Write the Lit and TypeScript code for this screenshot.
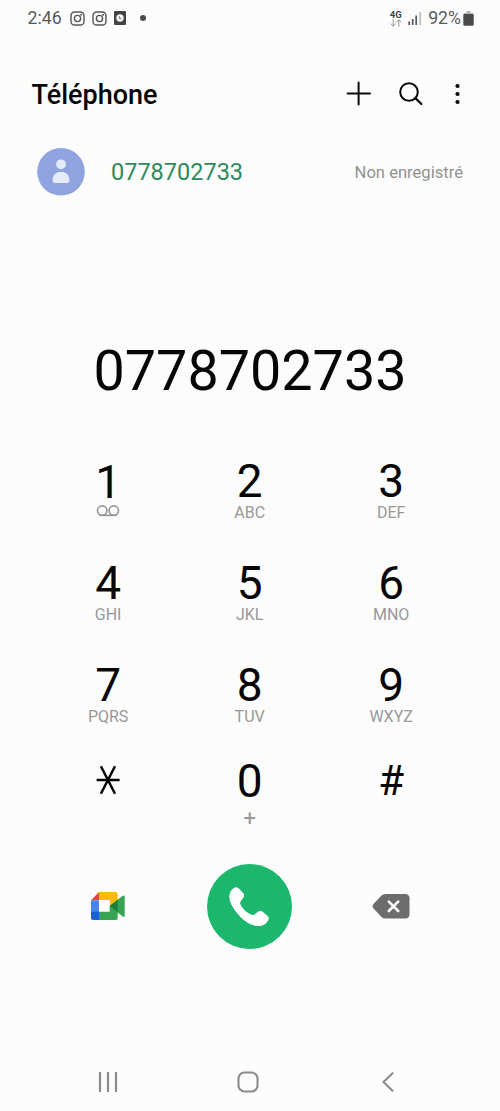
import { LitElement, html, css, nothing } from "lit";
import { customElement } from "lit/decorators.js";

const star = html`<svg class="star" viewBox="0 0 24 30" width="24" height="30" role="img" aria-label="*">
  <path d="M0.6 15H23.6M4.9 1.2L19 28.8M19 1.2L4.9 28.8" fill="none" stroke="#060606" stroke-width="2.5" />
</svg>`;

const voicemail = html`<svg class="voicemail" viewBox="0 0 24 12" width="24" height="12" aria-hidden="true">
  <g fill="none" stroke="#949494" stroke-width="1.6">
    <circle cx="6.2" cy="5.6" r="4.7" />
    <circle cx="17.8" cy="5.6" r="4.7" />
    <path d="M3.5 10.4H20.5" />
  </g>
</svg>`;

const instagram = html`<svg viewBox="0 0 15 15" width="15" height="15" aria-hidden="true">
  <g fill="none" stroke="#555" stroke-width="1.4">
    <rect x="1" y="1" width="13" height="13" rx="3.6" />
    <circle cx="7.5" cy="7.5" r="3.1" />
  </g>
  <circle cx="11.2" cy="3.8" r="1" fill="#555" />
</svg>`;

interface Key {
  label: string;
  letters?: string;
}

const keys: Key[] = [
  { label: "1" },
  { label: "2", letters: "ABC" },
  { label: "3", letters: "DEF" },
  { label: "4", letters: "GHI" },
  { label: "5", letters: "JKL" },
  { label: "6", letters: "MNO" },
  { label: "7", letters: "PQRS" },
  { label: "8", letters: "TUV" },
  { label: "9", letters: "WXYZ" },
  { label: "*" },
  { label: "0", letters: "+" },
  { label: "#" },
];

@customElement("app-root")
export class AppRoot extends LitElement {
  static styles = css`
    :host {
      display: flex;
      flex-direction: column;
      width: 500px;
      height: 1111px;
      overflow: hidden;
      background: #fcfcfc;
      color: #060606;
      font-family: Roboto, sans-serif;
    }
    svg {
      display: block;
      flex: none;
    }
    .status {
      display: flex;
      align-items: center;
      height: 36px;
      padding: 0 26px 0 27.5px;
      font-size: 17.7px;
      color: #5a5a5a;
    }
    .time {
      width: 42.5px;
    }
    .notices {
      display: flex;
      align-items: center;
      gap: 6.5px;
      flex: 1;
    }
    .dot {
      width: 6px;
      height: 6px;
      margin-left: 7px;
      border-radius: 50%;
      background: #4c4c4c;
    }
    .net {
      display: flex;
      flex-direction: column;
      align-items: center;
      margin-right: 6.5px;
      font-size: 9.5px;
      font-weight: 700;
      line-height: 9px;
      color: #444;
    }
    .signal {
      margin-right: 6px;
    }
    .battery {
      margin-left: 2px;
    }
    .header {
      display: flex;
      align-items: center;
      height: 60px;
      margin-top: 29px;
      padding: 0 38px 0 31.5px;
    }
    .title {
      flex: 1;
      margin: 0;
      font-size: 27px;
      font-weight: 500;
      line-height: 60px;
    }
    .contact {
      display: flex;
      align-items: center;
      height: 48px;
      margin-top: 23px;
      padding: 0 37px;
    }
    .number {
      flex: 1;
      margin-left: 26px;
      font-size: 23.5px;
      line-height: 49px;
      color: #2c8a5c;
    }
    .tag {
      padding-top: 2px;
      font-size: 16.6px;
      line-height: 48px;
      color: #929292;
    }
    .display {
      height: 60px;
      margin-top: 145px;
      font-size: 55.7px;
      line-height: 60px;
      text-align: center;
    }
    .pad {
      display: grid;
      grid-template-columns: repeat(3, 141.5px);
      grid-template-rows: 102px 102px 96px 105px;
      margin: 57px 0 0 37.4px;
    }
    .key {
      display: flex;
      flex-direction: column;
      align-items: center;
    }
    .digit {
      height: 46px;
      font-size: 46px;
      line-height: 46px;
    }
    .digit.one {
      line-height: 49px;
    }
    .digit.hash {
      font-size: 42px;
      line-height: 46px;
    }
    .letters {
      font-size: 16px;
      line-height: 17px;
      color: #989898;
    }
    .letters.plus {
      margin-top: 6px;
      font-size: 22px;
      line-height: 17px;
    }
    .star {
      margin-top: 7px;
    }
    .voicemail {
      margin-top: 1px;
    }
    .actions {
      display: grid;
      grid-template-columns: repeat(3, 141.5px);
      place-items: center;
      height: 86px;
      margin: 0 0 0 37.4px;
    }
    .call {
      display: flex;
      width: 85px;
      height: 85px;
      border-radius: 50%;
      background: #1ab76c;
    }
    .nav {
      display: grid;
      grid-template-columns: repeat(3, 140px);
      place-items: center;
      height: 59px;
      margin: auto 0 0 38.2px;
    }
  `;

  private renderKey(key: Key) {
    if (key.label === "*") return html`<div class="key">${star}</div>`;
    const kind = key.label === "1" ? "one" : key.label === "#" ? "hash" : "";
    return html`<div class="key">
      <div class="digit ${kind}">${key.label}</div>
      ${key.label === "1" ? voicemail : nothing}
      ${key.letters
        ? html`<div class="letters ${key.letters === "+" ? "plus" : ""}">${key.letters}</div>`
        : nothing}
    </div>`;
  }

  render() {
    return html`
      <div class="status">
        <div class="time">2:46</div>
        <div class="notices">
          ${instagram}${instagram}
          <svg viewBox="0 0 13 14" width="13" height="14" aria-hidden="true">
            <rect x="1" width="12" height="14" rx="1" fill="#444" />
            <circle cx="7" cy="7" r="3.7" fill="#f2f2f2" />
            <path d="M6.3 5.2V7.4H8.3" fill="none" stroke="#777" stroke-width="1" />
          </svg>
          <div class="dot"></div>
        </div>
        <div class="net">
          <span>4G</span>
          <svg viewBox="0 0 12 8" width="12" height="8" aria-hidden="true">
            <path d="M3.2 .3V7M.7 4.6L3.2 7.2L5.7 4.6M8.8 7.7V1M6.3 3.4L8.8 .8L11.3 3.4" fill="none" stroke="#999" stroke-width="1" />
          </svg>
        </div>
        <svg class="signal" viewBox="0 0 14 14" width="14" height="14" aria-hidden="true">
          <path d="M1.2 10.5V14M4.7 8V14M8.2 4.5V14" stroke="#555" stroke-width="1.7" />
          <path d="M12.2 1V14" stroke="#bdbdbd" stroke-width="1.7" />
        </svg>
        <div>92%</div>
        <svg class="battery" viewBox="0 0 11 15" width="11" height="15" aria-hidden="true">
          <path d="M3.500 0h4v2h3v2H.5V2h3z" fill="#b5b5b5" />
          <rect x=".3" y="3" width="10.400" height="11.700" rx="1.500" fill="#4a4a4a" />
        </svg>
      </div>

      <div class="header">
        <h1 class="title">Téléphone</h1>
        <svg viewBox="0 0 116 30" width="116" height="30" aria-hidden="true">
          <g fill="none" stroke="#0a0a0a" stroke-linecap="round">
            <path d="M1.6 13.5H24M12.6 2.5V24.5" stroke-width="2" />
            <circle cx="63" cy="12" r="8.8" stroke-width="2" />
            <path d="M69.6 18.4L75.4 24" stroke-width="2.2" />
          </g>
          <circle cx="111.5" cy="6" r="2.1" />
          <circle cx="111.5" cy="14" r="2.1" />
          <circle cx="111.5" cy="22" r="2.1" />
        </svg>
      </div>

      <div class="contact">
        <svg viewBox="0 0 48 48" width="48" height="48" aria-hidden="true">
          <circle cx="24" cy="23.8" r="23.8" fill="#8fa3e0" />
          <circle cx="24" cy="16.3" r="4.9" fill="#e6ebfc" />
          <path d="M15.6 32.6C15.6 26.4 19.2 24 24 24S32.4 26.4 32.4 32.6C32.4 34.4 31.4 35 29.8 35H18.2C16.6 35 15.6 34.4 15.6 32.6Z" fill="#e6ebfc" />
        </svg>
        <div class="number">0778702733</div>
        <div class="tag">Non enregistré</div>
      </div>

      <div class="display">0778702733</div>

      <div class="pad">${keys.map((k) => this.renderKey(k))}</div>

      <div class="actions">
        <svg viewBox="0 0 101 84" width="33.7" height="28" aria-hidden="true">
          <path d="M24 0H74Q80 0 80 6V38L56 42V25H24Z" fill="#fbba08" />
          <path d="M24 0V25H0Z" fill="#df4a3c" />
          <path d="M0 25H24V60H0Z" fill="#4784ee" />
          <path d="M0 59H24V84H6Q0 84 0 78Z" fill="#1b62cf" />
          <path d="M24 25H56V59H24Z" fill="#fff" />
          <path d="M24 59H56V42H80V78Q80 84 74 84H24Z" fill="#36a452" />
          <path d="M56 42L94 12Q101 8 101 14V72Q101 78 94 73Z" fill="#36a452" />
          <path d="M56 42L80 23V61Z" fill="#18803a" />
        </svg>
        <div class="call">
          <svg viewBox="0 0 255 255" width="85" height="85" aria-hidden="true">
            <path d="M82 71Q89 67 95 73L109 88Q114 94 109 101L101 112Q98 117 101 122C109 137 122 148 135 152Q140 154 144 150L153 143Q160 138 167 143L181 155Q188 161 184 168Q175 186 155 186C130 186 106 168 90 147C76 129 66 112 67 96Q68 79 82 71Z" fill="#fff" />
          </svg>
        </div>
        <svg viewBox="0 0 38 26" width="38" height="26" aria-hidden="true">
          <path d="M13.5 1H33Q37.5 1 37.5 5.500V21Q37.500 25.500 33 25.500H13.500Q11 25.500 9.500 24L1.500 15.500Q-.3 13.300 1.500 11L9.500 2.500Q11 1 13.500 1Z" fill="#6c6c6c" />
          <path d="M16.800 8.600L26.200 18M26.200 8.600L16.800 18" stroke="#fff" stroke-width="2.600" stroke-linecap="round" />
        </svg>
      </div>

      <div class="nav">
        <svg viewBox="0 0 20 20" width="20" height="20" aria-hidden="true">
          <path d="M2 1V19M10 1V19M18 1V19" stroke="#8b8b8b" stroke-width="2.200" stroke-linecap="round" />
        </svg>
        <svg viewBox="0 0 22 22" width="22" height="22" aria-hidden="true">
          <rect x="1.500" y="1.500" width="19" height="19" rx="6" fill="none" stroke="#8b8b8b" stroke-width="2.100" />
        </svg>
        <svg viewBox="0 0 12 20" width="12" height="20" aria-hidden="true">
          <path d="M10.500 1.200L1.500 10L10.500 18.800" fill="none" stroke="#8b8b8b" stroke-width="2.100" stroke-linecap="round" stroke-linejoin="round" />
        </svg>
      </div>
    `;
  }
}
